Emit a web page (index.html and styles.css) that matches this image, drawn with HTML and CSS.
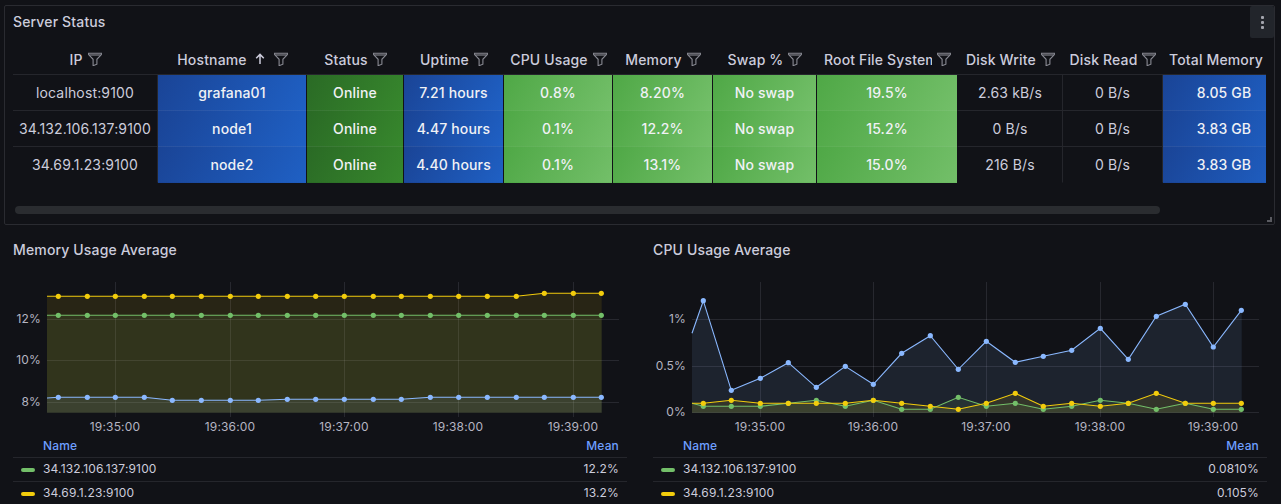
FILE: index.html
```html
<!DOCTYPE html>
<html lang="en">
<head>
  <meta charset="UTF-8" />
  <title>Server Status</title>
  <link rel="stylesheet" href="styles.css">
</head>
<body>
  <svg class="defs" width="0" height="0" aria-hidden="true">
    <defs>
      <symbol id="funnel" viewBox="0 0 14 14">
        <path d="M0.6 1.2h12.8v1.4L8.9 7.3v4.9l-3.8 1.5V7.3L0.6 2.6z" />
        <path d="M1.2 3h11.6" />
      </symbol>
      <marker id="dot-blue" class="dot-blue" markerUnits="userSpaceOnUse" markerWidth="6" markerHeight="6" refX="3" refY="3"><circle cx="3" cy="3" r="2.6" /></marker>
      <marker id="dot-green" class="dot-green" markerUnits="userSpaceOnUse" markerWidth="6" markerHeight="6" refX="3" refY="3"><circle cx="3" cy="3" r="2.6" /></marker>
      <marker id="dot-yellow" class="dot-yellow" markerUnits="userSpaceOnUse" markerWidth="6" markerHeight="6" refX="3" refY="3"><circle cx="3" cy="3" r="2.6" /></marker>
    </defs>
  </svg>

  <section class="panel status-panel">
    <div class="panel-head"><h2>Server Status</h2></div>
    <button class="menu-btn" aria-label="Panel menu"><span></span><span></span><span></span></button>

    <div class="table-wrap">
      <table class="status-table">
        <colgroup>
          <col class="c-ip"><col class="c-host"><col class="c-status"><col class="c-uptime"><col class="c-cpu"><col class="c-mem">
          <col class="c-swap"><col class="c-root"><col class="c-write"><col class="c-read"><col class="c-total">
        </colgroup>
        <thead>
          <tr>
            <th><div class="th-in"><span class="th-label">IP</span><svg class="funnel"><use href="#funnel" /></svg></div></th>
            <th><div class="th-in"><span class="th-label">Hostname</span><svg class="sort" viewBox="0 0 10 12"><path d="M5 11V1.5M1.2 5.2 5 1.4l3.8 3.8" /></svg><svg class="funnel"><use href="#funnel" /></svg></div></th>
            <th><div class="th-in"><span class="th-label">Status</span><svg class="funnel"><use href="#funnel" /></svg></div></th>
            <th><div class="th-in"><span class="th-label">Uptime</span><svg class="funnel"><use href="#funnel" /></svg></div></th>
            <th><div class="th-in"><span class="th-label">CPU Usage</span><svg class="funnel"><use href="#funnel" /></svg></div></th>
            <th><div class="th-in"><span class="th-label">Memory</span><svg class="funnel"><use href="#funnel" /></svg></div></th>
            <th><div class="th-in"><span class="th-label">Swap %</span><svg class="funnel"><use href="#funnel" /></svg></div></th>
            <th class="th-root"><div class="th-in"><span class="th-label">Root File System</span><svg class="funnel"><use href="#funnel" /></svg></div></th>
            <th><div class="th-in"><span class="th-label">Disk Write</span><svg class="funnel"><use href="#funnel" /></svg></div></th>
            <th><div class="th-in"><span class="th-label">Disk Read</span><svg class="funnel"><use href="#funnel" /></svg></div></th>
            <th class="th-total"><div class="th-in"><span class="th-label">Total Memory</span><svg class="funnel"><use href="#funnel" /></svg></div></th>
          </tr>
        </thead>
        <tbody>
          <tr>
            <td>localhost:9100</td>
            <td class="blue">grafana01</td>
            <td class="dark-green">Online</td>
            <td class="blue">7.21 hours</td>
            <td class="green">0.8%</td>
            <td class="green">8.20%</td>
            <td class="green">No swap</td>
            <td class="green">19.5%</td>
            <td>2.63 kB/s</td>
            <td>0 B/s</td>
            <td class="blue">8.05 GB</td>
          </tr>
          <tr>
            <td>34.132.106.137:9100</td>
            <td class="blue">node1</td>
            <td class="dark-green">Online</td>
            <td class="blue">4.47 hours</td>
            <td class="green">0.1%</td>
            <td class="green">12.2%</td>
            <td class="green">No swap</td>
            <td class="green">15.2%</td>
            <td>0 B/s</td>
            <td>0 B/s</td>
            <td class="blue">3.83 GB</td>
          </tr>
          <tr>
            <td>34.69.1.23:9100</td>
            <td class="blue">node2</td>
            <td class="dark-green">Online</td>
            <td class="blue">4.40 hours</td>
            <td class="green">0.1%</td>
            <td class="green">13.1%</td>
            <td class="green">No swap</td>
            <td class="green">15.0%</td>
            <td>216 B/s</td>
            <td>0 B/s</td>
            <td class="blue">3.83 GB</td>
          </tr>
        </tbody>
      </table>
    </div>
    <div class="scrollbar"></div>
    <div class="resize-handle"></div>
  </section>

  <div class="chart-row">
    <section class="panel chart-panel">
      <div class="panel-head"><h2>Memory Usage Average</h2></div>
      <svg class="chart" viewBox="13 272 614 162" width="614" height="162">
        <g class="grid">
          <path d="M47 319.5H619M47 360.5H619M47 402.5H619" />
          <path d="M115.5 282V417M230.5 282V417M344.5 282V417M458.5 282V417M573.5 282V417" />
        </g>
        <polygon class="fill-blue" points="47,398 58.3,397.3 144.3,397.3 172.3,400.3 258.3,400.3 287.3,399.3 401.3,399.3 430.3,397.3 601.7,397.3 601.7,412.7 47,412.7" />
        <polygon class="fill-green" points="47,315.3 601.7,315.3 601.7,412.7 47,412.7" />
        <polygon class="fill-yellow" points="47,296.3 516.3,296.3 544.3,293.3 601.7,293.3 601.7,412.7 47,412.7" />
        <polyline class="line line-blue" points="47,398 58.3,397.3 87.3,397.3 115.3,397.3 144.3,397.3 172.3,400.3 201.3,400.3 230.3,400.3 258.3,400.3 287.3,399.3 315.7,399.3 344.3,399.3 373.3,399.3 401.3,399.3 430.3,397.3 458.7,397.3 487.3,397.3 516.3,397.3 544.3,397.3 573.3,397.3 601.3,397.3" />
        <polyline class="line line-green" points="47,315.3 58.3,315.3 87.3,315.3 115.3,315.3 144.3,315.3 172.3,315.3 201.3,315.3 230.3,315.3 258.3,315.3 287.3,315.3 315.7,315.3 344.3,315.3 373.3,315.3 401.3,315.3 430.3,315.3 458.7,315.3 487.3,315.3 516.3,315.3 544.3,315.3 573.3,315.3 601.3,315.3" />
        <polyline class="line line-yellow" points="47,296.3 58.3,296.3 87.3,296.3 115.3,296.3 144.3,296.3 172.3,296.3 201.3,296.3 230.3,296.3 258.3,296.3 287.3,296.3 315.7,296.3 344.3,296.3 373.3,296.3 401.3,296.3 430.3,296.3 458.7,296.3 487.3,296.3 516.3,296.3 544.3,293.3 573.3,293.3 601.3,293.3" />
        <g class="y-labels">
          <text x="41" y="323">12%</text>
          <text x="41" y="364">10%</text>
          <text x="41" y="406">8%</text>
        </g>
        <g class="x-labels">
          <text x="115" y="431">19:35:00</text>
          <text x="230" y="431">19:36:00</text>
          <text x="344" y="431">19:37:00</text>
          <text x="458" y="431">19:38:00</text>
          <text x="573" y="431">19:39:00</text>
        </g>
      </svg>
      <table class="legend">
        <thead><tr><th class="l-name">Name</th><th class="l-mean">Mean</th></tr></thead>
        <tbody>
          <tr><td class="l-name"><i class="swatch swatch-green"></i>34.132.106.137:9100</td><td class="l-mean">12.2%</td></tr>
          <tr><td class="l-name"><i class="swatch swatch-yellow"></i>34.69.1.23:9100</td><td class="l-mean">13.2%</td></tr>
        </tbody>
      </table>
    </section>

    <section class="panel chart-panel">
      <div class="panel-head"><h2>CPU Usage Average</h2></div>
      <svg class="chart" viewBox="653 272 614 162" width="614" height="162">
        <g class="grid">
          <path d="M692 319.5H1259M692 366.5H1259M692 412.5H1259" />
          <path d="M760.5 282V417M873.5 282V417M986.5 282V417M1100.5 282V417M1213.5 282V417" />
        </g>
        <polygon class="fill-blue" points="692,333.3 703.3,300.7 731.3,390.3 760.3,378.3 788.3,362.7 816.3,387.3 845.3,366.3 873.3,384.3 901.7,353.3 930.3,335.7 958.3,369.3 986.3,341.3 1015.3,362.3 1043.3,356.3 1071.7,350.3 1100.3,328.3 1128.3,359.3 1156.3,316.3 1185.3,304.3 1213.3,347 1241.7,310.3 1241.7,412.7 692,412.7" />
        <polygon class="fill-green" points="692,403.3 703.3,406.3 731.3,406.3 760.3,406.3 788.3,403.3 816.3,400.3 845.3,406.3 873.3,400.3 901.7,409.3 930.3,409.3 958.3,397.3 986.3,406.3 1015.3,403.3 1043.3,409.3 1071.7,406.3 1100.3,400.3 1128.3,403.3 1156.3,409.3 1185.3,403.3 1213.3,409.3 1241.7,409.3 1241.7,412.7 692,412.7" />
        <polygon class="fill-yellow" points="692,403.3 703.3,403.3 731.3,400.3 760.3,403.3 788.3,403.3 816.3,403.3 845.3,403.3 873.3,400.3 901.7,403.3 930.3,406.3 958.3,409.3 986.3,403.3 1015.3,393.3 1043.3,406.3 1071.7,403.3 1100.3,406.3 1128.3,403.3 1156.3,393.3 1185.3,403.3 1213.3,403.3 1241.7,403.3 1241.7,412.7 692,412.7" />
        <polyline class="line line-blue" points="692,333.3 703.3,300.7 731.3,390.3 760.3,378.3 788.3,362.7 816.3,387.3 845.3,366.3 873.3,384.3 901.7,353.3 930.3,335.7 958.3,369.3 986.3,341.3 1015.3,362.3 1043.3,356.3 1071.7,350.3 1100.3,328.3 1128.3,359.3 1156.3,316.3 1185.3,304.3 1213.3,347 1241.3,310.3" />
        <polyline class="line line-green" points="692,403.3 703.3,406.3 731.3,406.3 760.3,406.3 788.3,403.3 816.3,400.3 845.3,406.3 873.3,400.3 901.7,409.3 930.3,409.3 958.3,397.3 986.3,406.3 1015.3,403.3 1043.3,409.3 1071.7,406.3 1100.3,400.3 1128.3,403.3 1156.3,409.3 1185.3,403.3 1213.3,409.3 1241.3,409.3" />
        <polyline class="line line-yellow" points="692,403.3 703.3,403.3 731.3,400.3 760.3,403.3 788.3,403.3 816.3,403.3 845.3,403.3 873.3,400.3 901.7,403.3 930.3,406.3 958.3,409.3 986.3,403.3 1015.3,393.3 1043.3,406.3 1071.7,403.3 1100.3,406.3 1128.3,403.3 1156.3,393.3 1185.3,403.3 1213.3,403.3 1241.3,403.3" />
        <g class="y-labels">
          <text x="686" y="323">1%</text>
          <text x="686" y="370">0.5%</text>
          <text x="686" y="416">0%</text>
        </g>
        <g class="x-labels">
          <text x="760" y="431">19:35:00</text>
          <text x="873" y="431">19:36:00</text>
          <text x="986" y="431">19:37:00</text>
          <text x="1100" y="431">19:38:00</text>
          <text x="1213" y="431">19:39:00</text>
        </g>
      </svg>
      <table class="legend">
        <thead><tr><th class="l-name">Name</th><th class="l-mean">Mean</th></tr></thead>
        <tbody>
          <tr><td class="l-name"><i class="swatch swatch-green"></i>34.132.106.137:9100</td><td class="l-mean">0.0810%</td></tr>
          <tr><td class="l-name"><i class="swatch swatch-yellow"></i>34.69.1.23:9100</td><td class="l-mean">0.105%</td></tr>
        </tbody>
      </table>
    </section>
  </div>
</body>
</html>
```

FILE: styles.css
```css
html, body {
  height: 504px;
  overflow: hidden;
}
body {
  margin: 0;
  padding: 5px 6px 0 4px;
  box-sizing: border-box;
  background-color: #111217;
  color: #ccccdc;
  font-family: Inter, 'Noto Sans', sans-serif;
  font-size: 14px;
  letter-spacing: 0.01071em;
}
.defs {
  display: block;
  height: 0;
}

/* panels */
.panel {
  position: relative;
  border: 1px solid transparent;
  box-sizing: border-box;
}
.status-panel {
  height: 220px;
  border-color: #2a2b31;
  border-radius: 2px;
}
.panel-head {
  height: 32px;
  box-sizing: border-box;
  display: flex;
  align-items: center;
  padding: 0 0 2px 8px;
}
.panel-head h2 {
  margin: 0;
  font-size: 14px;
  font-weight: 500;
  color: #ccccdc;
}
.menu-btn {
  position: absolute;
  top: 0;
  right: 0;
  width: 24px;
  height: 32px;
  padding: 0;
  border: none;
  border-radius: 2px;
  background-color: #22252b;
  display: flex;
  flex-direction: column;
  align-items: center;
  justify-content: center;
  gap: 2px;
}
.menu-btn span {
  width: 3px;
  height: 3px;
  background-color: #a3a4ad;
  border-radius: 1px;
}
.resize-handle {
  position: absolute;
  right: 2px;
  bottom: 2px;
  width: 3px;
  height: 3px;
  border-right: 2px solid #5a5b61;
  border-bottom: 2px solid #5a5b61;
}

/* status table */
.table-wrap {
  margin: 6px 8px 0;
  width: 1253px;
  overflow: hidden;
}
.status-table {
  table-layout: fixed;
  border-collapse: separate;
  border-spacing: 0;
  width: 1267px;
}
.c-ip { width: 145px; }
.c-host { width: 149px; }
.c-status { width: 97px; }
.c-uptime { width: 100px; }
.c-cpu { width: 109px; }
.c-mem { width: 100px; }
.c-swap { width: 104px; }
.c-root { width: 141px; }
.c-write { width: 105px; }
.c-read { width: 100px; }
.c-total { width: 122px; }

.status-table th {
  height: 30px;
  padding: 0 5px;
  border-bottom: 1px solid #25262c;
  font-weight: 500;
}
.status-table th.th-root {
  padding: 0 7px;
}
.status-table th.th-total {
  padding: 0 0 0 3px;
}
.th-in {
  display: flex;
  align-items: center;
  justify-content: center;
  gap: 5px;
}
.th-label {
  white-space: nowrap;
  overflow: hidden;
  min-width: 0;
}
.funnel {
  flex: none;
  width: 14px;
  height: 14px;
  fill: none;
  stroke: #8a8b94;
  stroke-width: 1.1;
}
.sort {
  flex: none;
  width: 10px;
  height: 12px;
  margin: 0 4px 0 3px;
  fill: none;
  stroke: #ccccdc;
  stroke-width: 1.5;
}
.status-table td {
  height: 35px;
  padding: 0;
  text-align: center;
  white-space: nowrap;
  border-bottom: 1px solid #25262c;
  border-right: 1px solid #25262c;
  background-clip: padding-box;
}
.status-table td:last-child {
  border-right: none;
}
.status-table tr:last-child td {
  border-bottom-color: transparent;
}
.status-table td.blue,
.status-table td.dark-green,
.status-table td.green {
  color: #f0f1f5;
  font-weight: 500;
  background-clip: border-box;
  border-right-color: #111217;
  border-bottom-color: rgba(255,255,255,0.07);
}
.status-table tr:last-child td.blue,
.status-table tr:last-child td.dark-green,
.status-table tr:last-child td.green {
  border-bottom-color: transparent;
}
.blue { background: linear-gradient(120deg, #1a4496, #1f60c4); }
.dark-green { background: linear-gradient(120deg, #2a6a25, #37872d); }
.green { background: linear-gradient(120deg, #4fa846, #73bf69); }

.scrollbar {
  width: 1145px;
  height: 8px;
  margin: 23px 0 0 10px;
  border-radius: 4px;
  background-color: #2a2c30;
}

/* charts */
.chart-row {
  display: grid;
  grid-template-columns: 631px 631px;
  column-gap: 9px;
  margin-top: 8px;
}
.chart {
  display: block;
  margin: 6px 8px 0;
}
.grid path {
  fill: none;
  stroke: rgba(204,204,220,0.12);
  stroke-width: 1;
}
.line {
  fill: none;
  stroke-width: 1.1;
  marker-mid: var(--dot);
  marker-end: var(--dot);
}
.line-blue { stroke: #8ab8ff; --dot: url(#dot-blue); }
.line-green { stroke: #73bf69; --dot: url(#dot-green); }
.line-yellow { stroke: #f2cc0c; --dot: url(#dot-yellow); }
.dot-blue circle { fill: #8ab8ff; }
.dot-green circle { fill: #73bf69; }
.dot-yellow circle { fill: #f2cc0c; }
.fill-blue { fill: #8ab8ff; fill-opacity: 0.1; }
.fill-green { fill: #73bf69; fill-opacity: 0.1; }
.fill-yellow { fill: #f2cc0c; fill-opacity: 0.1; }
.y-labels text,
.x-labels text {
  font-size: 12px;
  fill: #b5b5c2;
}
.y-labels text { text-anchor: end; }
.x-labels text { text-anchor: middle; }

/* legend */
.legend {
  width: 614px;
  margin: 0 8px;
  border-collapse: collapse;
  font-size: 12px;
}
.legend th {
  height: 23px;
  padding: 0;
  border-bottom: 1px solid #25262c;
  color: #6e9fff;
  font-weight: 500;
}
.legend td {
  height: 21px;
  padding: 0 0 2px;
  border-bottom: 1px solid #25262c;
}
.legend .l-name {
  text-align: left;
  white-space: nowrap;
}
.legend th.l-name {
  padding-left: 30px;
}
.legend .l-mean {
  text-align: right;
  padding-right: 8px;
}
.swatch {
  display: inline-block;
  width: 14px;
  height: 4px;
  margin: 0 8px 0 8px;
  border-radius: 2px;
  vertical-align: middle;
}
.swatch-green { background-color: #73bf69; }
.swatch-yellow { background-color: #f2cc0c; }
```
